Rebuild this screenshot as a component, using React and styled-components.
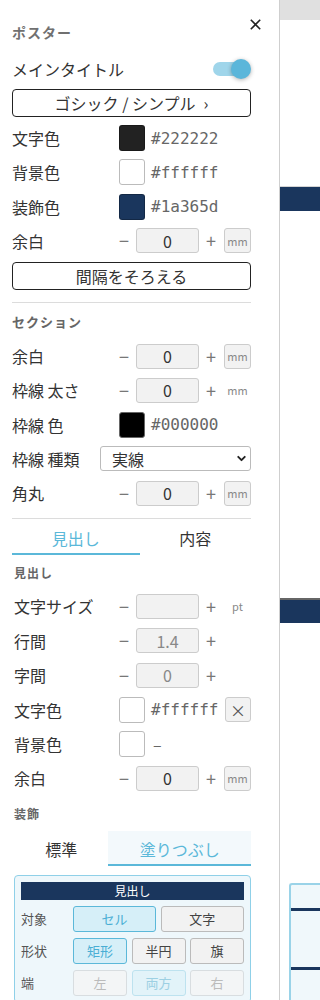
import React, { useState } from 'react'
import styled, { createGlobalStyle } from 'styled-components'
import { ChevronDown } from 'lucide-react'

const GlobalStyle = createGlobalStyle`
	html, body {
		margin: 0;
		padding: 0;
		background: #fff;
	}
	body {
		font-family: "Noto Sans CJK JP", "Noto Sans", sans-serif;
		color: #333;
	}
	* {
		box-sizing: border-box;
	}
	button, input, select {
		font-family: inherit;
	}
`

const Page = styled.div`
	display: flex;
	width: 320px;
	height: 1000px;
	overflow: hidden;
`

const Panel = styled.aside`
	position: relative;
	width: 280px;
	flex-shrink: 0;
	padding: 12px 28px 0 12px;
	border-right: 1px solid #cfcfcf;
	background: #fff;
`

const Header = styled.div`
	display: flex;
	align-items: center;
	height: 40px;
`

const PanelTitle = styled.h2`
	margin: 0;
	font-size: 14px;
	font-weight: 700;
	color: #707070;
	letter-spacing: 1px;
`

const CloseButton = styled.button`
	position: absolute;
	top: 18px;
	left: 249px;
	width: 13px;
	height: 13px;
	padding: 0;
	border: 0;
	background: none;
	display: flex;
	align-items: center;
	justify-content: center;
	cursor: pointer;
`

const Row = styled.div`
	display: flex;
	align-items: center;
	height: ${props => props.$h || 34.25}px;
	justify-content: ${props => (props.$spread ? 'space-between' : 'flex-start')};
`

const Label = styled.span`
	width: ${props => (props.$w ? `${props.$w}px` : 'auto')};
	flex-shrink: 0;
	font-size: 16px;
	color: #333;
	white-space: nowrap;
`

const Switch = styled.span`
	position: relative;
	display: inline-block;
	width: 38px;
	height: 20px;
	&::before {
		content: '';
		position: absolute;
		left: 0;
		top: 3px;
		width: 34px;
		height: 14px;
		border-radius: 7px;
		background: #9fd5ea;
	}
	&::after {
		content: '';
		position: absolute;
		right: 0;
		top: 0;
		width: 20px;
		height: 20px;
		border-radius: 50%;
		background: #5bb6da;
		box-shadow: 0 1px 4px rgba(0, 0, 0, 0.3);
	}
`

const OutlineButton = styled.button`
	display: flex;
	align-items: center;
	justify-content: center;
	gap: 8px;
	width: 100%;
	height: 28px;
	margin-top: ${props => props.$top || 0}px;
	padding: 0;
	border: 1px solid #222;
	border-radius: 4px;
	background: #fff;
	font-size: 16px;
	color: #333;
	cursor: pointer;
`

const Swatch = styled.span`
	width: 26px;
	height: 26px;
	margin-left: 5px;
	border-radius: 3px;
	border: 1px solid ${props => props.$border || 'rgba(0,0,0,0.25)'};
	background: ${props => props.$color};
	flex-shrink: 0;
`

const HexText = styled.span`
	margin-left: 6px;
	font-family: "DejaVu Sans Mono", "Liberation Mono", monospace;
	font-size: 16px;
	color: #666;
`

const Dash = styled.span`
	margin-left: 8px;
	font-size: 16px;
	color: #666;
`

const StepButton = styled.button`
	width: 20px;
	height: 25px;
	padding: 0;
	border: 0;
	background: none;
	font-size: 18px;
	line-height: 25px;
	color: #777;
	cursor: pointer;
`

const NumInput = styled.input`
	width: 63px;
	height: 25px;
	margin: 0 2px;
	padding: 0;
	border: 1px solid #ccc;
	border-radius: 3px;
	background: #f2f2f2;
	text-align: center;
	font-size: 16px;
	color: ${props => (props.$muted ? '#888' : '#333')};
`

const Unit = styled.span`
	display: flex;
	align-items: center;
	justify-content: center;
	width: 27px;
	height: 25px;
	margin-left: 3px;
	border: 1px solid ${props => (props.$boxed ? '#ccc' : 'transparent')};
	border-radius: 3px;
	background: ${props => (props.$boxed ? '#f2f2f2' : 'transparent')};
	font-size: 11px;
	color: #888;
`

const ClearBox = styled.button`
	margin-left: auto;
	width: 26px;
	height: 25px;
	padding: 0;
	border: 1px solid #ccc;
	border-radius: 3px;
	background: #f2f2f2;
	font-size: 16px;
	line-height: 1;
	color: #555;
`

const SelectWrap = styled.div`
	position: relative;
	flex: 1;
	height: 25px;
`

const Select = styled.select`
	width: 100%;
	height: 25px;
	padding: 0 0 0 11px;
	border: 1px solid #bbb;
	border-radius: 3px;
	background: #fff;
	appearance: none;
	font-size: 16px;
	color: #333;
`

const SelectArrow = styled.span`
	position: absolute;
	right: 3px;
	top: 6px;
	display: flex;
	pointer-events: none;
	color: #222;
`

const Divider = styled.div`
	height: 1px;
	margin-top: ${props => props.$top || 0}px;
	background: #dcdcdc;
`

const SectionTitle = styled.div`
	display: flex;
	align-items: center;
	height: ${props => props.$h || 36}px;
	font-size: ${props => props.$size || 13}px;
	font-weight: 700;
	color: #666;
	letter-spacing: 1px;
`

const TabBar = styled.div`
	display: flex;
`

const Tab = styled.button`
	flex: 1 1 auto;
	height: ${props => props.$h || 36}px;
	padding: ${props => props.$pt || 4}px 0 0;
	border: 0;
	border-bottom: 2px solid ${props => (props.$active ? '#5bb8d9' : 'transparent')};
	background: ${props => (props.$active && props.$filled ? '#f3f9fc' : 'transparent')};
	font-size: 16px;
	color: ${props => (props.$active ? '#5bb8d9' : '#333')};
	cursor: pointer;
`

const TabContent = styled.div`
	padding-left: 2px;
`

const Card = styled.div`
	margin-top: 9px;
	padding: 6px;
	border: 1px solid #8fd0e8;
	border-radius: 4px;
	background: #eef7fb;
`

const CardHead = styled.div`
	display: flex;
	align-items: center;
	justify-content: center;
	height: 18px;
	background: #1a365d;
	color: #fff;
	font-size: 12px;
`

const OptRow = styled.div`
	display: flex;
	height: 26px;
	margin-top: 6px;
`

const OptLabel = styled.span`
	display: flex;
	align-items: center;
	width: 52px;
	flex-shrink: 0;
	font-size: 13px;
	color: #555;
`

const Options = styled.div`
	flex: 1;
	display: grid;
	grid-template-columns: repeat(${props => props.$cols}, 1fr);
	gap: 4.5px;
`

const optTones = {
	active: { bg: '#d6eff8', border: '#5bb8d9', text: '#4aaed4' },
	normal: { bg: '#f2f2f2', border: '#bbb', text: '#444' },
	off: { bg: '#f3f5f6', border: '#d8dde0', text: '#bbb' },
	offActive: { bg: '#e2f3f9', border: '#bde2ef', text: '#9dd0e3' },
}

const OptButton = styled.button`
	height: 26px;
	padding: 0;
	border: 1px solid ${props => optTones[props.$tone].border};
	border-radius: 3px;
	background: ${props => optTones[props.$tone].bg};
	font-size: 13px;
	color: ${props => optTones[props.$tone].text};
	cursor: pointer;
`

const Preview = styled.div`
	flex: 1;
	min-width: 0;
	overflow: hidden;
	background: #fff;
`

const PreviewTop = styled.div`
	height: 20px;
	background: #e0e0e0;
`

const Band = styled.div`
	height: 25px;
	margin-top: ${props => props.$top}px;
	border-top: ${props => props.$rule};
	background: #1a365d;
`

const PreviewCard = styled.div`
	height: 200px;
	margin: 260px 0 0 9px;
	border: 2px solid #9ad3e8;
	border-right: 0;
	border-radius: 3px 0 0 0;
	background: #f0f8fb;
`

const PreviewRule = styled.div`
	height: 3px;
	margin-top: ${props => props.$top}px;
	background: #1a365d;
`

const CloseIcon = () => (
	<svg width="11" height="11" viewBox="0 0 11 11">
		<path d="M0.8 0.8 L10.2 10.2 M10.2 0.8 L0.8 10.2" stroke="#222" strokeWidth="1.6" />
	</svg>
)

const Stepper = ({ value, unit, boxed, muted }) => (
	<React.Fragment>
		<StepButton>−</StepButton>
		<NumInput value={value} readOnly $muted={muted} />
		<StepButton>+</StepButton>
		{unit && <Unit $boxed={boxed}>{unit}</Unit>}
	</React.Fragment>
)

const ColorRow = ({ label, color, hex, border, w = 102, children }) => (
	<Row>
		<Label $w={w}>{label}</Label>
		<Swatch $color={color} $border={border} />
		{hex ? <HexText>{hex}</HexText> : <Dash>–</Dash>}
		{children}
	</Row>
)

const App = () => {
	const [mainTab, setMainTab] = useState('heading')
	const [decoTab, setDecoTab] = useState('fill')

	return (
		<React.Fragment>
			<GlobalStyle />
			<Page>
				<Panel>
					<Header>
						<PanelTitle>ポスター</PanelTitle>
					</Header>
					<CloseButton aria-label="close">
						<CloseIcon />
					</CloseButton>

					<Row $h={34} $spread>
						<Label>メインタイトル</Label>
						<Switch />
					</Row>
					<OutlineButton $top={3}>
						<span>ゴシック / シンプル</span>
						<span>›</span>
					</OutlineButton>

					<div style={{ height: 4 }} />
					<ColorRow label="文字色" color="#222222" hex="#222222" />
					<ColorRow label="背景色" color="#ffffff" hex="#ffffff" border="#bbb" />
					<ColorRow label="装飾色" color="#1a365d" hex="#1a365d" />
					<Row>
						<Label $w={102}>余白</Label>
						<Stepper value="0" unit="mm" boxed />
					</Row>
					<OutlineButton $top={4}>間隔をそろえる</OutlineButton>

					<Divider $top={12} />
					<SectionTitle>セクション</SectionTitle>
					<Row>
						<Label $w={102}>余白</Label>
						<Stepper value="0" unit="mm" boxed />
					</Row>
					<Row>
						<Label $w={102}>枠線 太さ</Label>
						<Stepper value="0" unit="mm" />
					</Row>
					<ColorRow label="枠線 色" color="#000000" hex="#000000" border="#666" />
					<Row>
						<Label $w={88}>枠線 種類</Label>
						<SelectWrap>
							<Select defaultValue="solid">
								<option value="solid">実線</option>
								<option value="dashed">破線</option>
								<option value="dotted">点線</option>
							</Select>
							<SelectArrow>
								<ChevronDown size={13} strokeWidth={3.5} />
							</SelectArrow>
						</SelectWrap>
					</Row>
					<Row>
						<Label $w={102}>角丸</Label>
						<Stepper value="0" unit="mm" boxed />
					</Row>

					<Divider $top={8} />
					<TabBar>
						<Tab $active={mainTab === 'heading'} onClick={() => setMainTab('heading')}>
							見出し
						</Tab>
						<Tab $active={mainTab === 'body'} onClick={() => setMainTab('body')}>
							内容
						</Tab>
					</TabBar>

					<TabContent>
						<SectionTitle $h={34} $size={12}>見出し</SectionTitle>
						<Row $h={34.4}>
							<Label $w={100}>文字サイズ</Label>
							<Stepper value="" unit="pt" />
						</Row>
						<Row $h={34.4}>
							<Label $w={100}>行間</Label>
							<Stepper value="1.4" muted />
						</Row>
						<Row $h={34.4}>
							<Label $w={100}>字間</Label>
							<Stepper value="0" muted />
						</Row>
						<Row $h={34.4}>
							<Label $w={100}>文字色</Label>
							<Swatch $color="#fff" $border="#bbb" />
							<HexText>#ffffff</HexText>
							<ClearBox>×</ClearBox>
						</Row>
						<Row $h={34.4}>
							<Label $w={100}>背景色</Label>
							<Swatch $color="#fff" $border="#bbb" />
							<Dash>–</Dash>
						</Row>
						<Row $h={34.4}>
							<Label $w={100}>余白</Label>
							<Stepper value="0" unit="mm" boxed />
						</Row>

						<SectionTitle $h={35} $size={12}>装飾</SectionTitle>
						<TabBar>
							<Tab $h={35} $pt={3} $filled $active={decoTab === 'plain'} onClick={() => setDecoTab('plain')}>
								標準
							</Tab>
							<Tab $h={35} $pt={3} $filled $active={decoTab === 'fill'} onClick={() => setDecoTab('fill')}>
								塗りつぶし
							</Tab>
						</TabBar>

						<Card>
							<CardHead>見出し</CardHead>
							<OptRow>
								<OptLabel>対象</OptLabel>
								<Options $cols={2}>
									<OptButton $tone="active">セル</OptButton>
									<OptButton $tone="normal">文字</OptButton>
								</Options>
							</OptRow>
							<OptRow>
								<OptLabel>形状</OptLabel>
								<Options $cols={3}>
									<OptButton $tone="active">矩形</OptButton>
									<OptButton $tone="normal">半円</OptButton>
									<OptButton $tone="normal">旗</OptButton>
								</Options>
							</OptRow>
							<OptRow>
								<OptLabel>端</OptLabel>
								<Options $cols={3}>
									<OptButton $tone="off">左</OptButton>
									<OptButton $tone="offActive">両方</OptButton>
									<OptButton $tone="off">右</OptButton>
								</Options>
							</OptRow>
						</Card>
					</TabContent>
				</Panel>

				<Preview>
					<PreviewTop />
					<Band $top={166} $rule="1px solid #d4d4d4" />
					<Band $top={387} $rule="2px solid #666" />
					<PreviewCard>
						<PreviewRule $top={23} />
						<PreviewRule $top={56} />
					</PreviewCard>
				</Preview>
			</Page>
		</React.Fragment>
	)
}

export default App
